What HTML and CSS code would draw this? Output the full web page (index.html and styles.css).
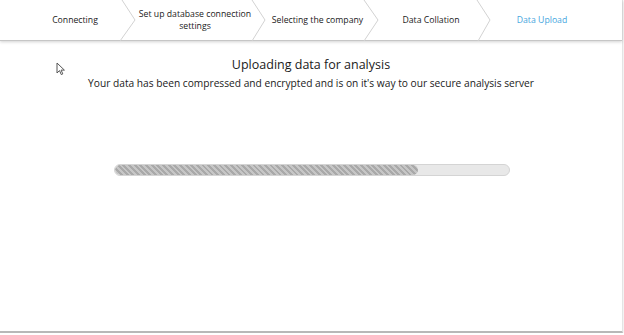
FILE: index.html
```html
<!DOCTYPE html>
<html lang="en">
<head>
    <meta charset="UTF-8">
    <title>Data Upload</title>
    <link rel="stylesheet" href="styles.css">
</head>
<body>
<div class="window">
    <div class="steps">
        <div class="step step-1">Connecting</div>
        <svg class="chev" width="16" height="41" viewBox="0 0 16 41"><path d="M2 0 L15 20 L0 41" /></svg>
        <div class="step step-2">Set up database connection<br>settings</div>
        <svg class="chev" width="16" height="41" viewBox="0 0 16 41"><path d="M2 0 L15 20 L2 41" /></svg>
        <div class="step step-3">Selecting the company</div>
        <svg class="chev" width="16" height="41" viewBox="0 0 16 41"><path d="M1 0 L15 20 L1 41" /></svg>
        <div class="step step-4">Data Collation</div>
        <svg class="chev" width="16" height="41" viewBox="0 0 16 41"><path d="M2 0 L15 20 L3 41" /></svg>
        <div class="step step-5 active">Data Upload</div>
    </div>

    <div class="content">
        <h1>Uploading data for analysis</h1>
        <p>Your data has been compressed and encrypted and is on it's way to our secure analysis server</p>
        <div class="progress">
            <div class="fill" style="width: 77%"></div>
        </div>
    </div>

    <svg class="cursor" width="10" height="14" viewBox="0 0 10 14">
        <path d="M1 1 L1 11 L3.5 8.6 L5.3 12.6 L6.8 11.9 L5.1 8.1 L8.4 8.1 Z" />
    </svg>
</div>
</body>
</html>
```

FILE: styles.css
```css
body {
    margin: 0;
    background: #fff;
    font-family: 'Segoe UI', 'Open Sans', sans-serif;
    color: #222;
}

.window {
    position: relative;
    width: 622px;
    height: 331px;
    border-right: 1px solid #e4e4e4;
    border-bottom: 2px solid #b8b8b8;
    box-shadow: 0 1px 2px rgba(0, 0, 0, 0.15);
}

.steps {
    display: flex;
    height: 40px;
    padding-left: 30px;
    border-bottom: 1px solid #c6c6c6;
    box-shadow: 0 1px 3px rgba(0, 0, 0, 0.18);
    font-size: 8.7px;
    color: #1a1a1a;
}

.step {
    display: flex;
    align-items: center;
    justify-content: center;
    text-align: center;
    white-space: nowrap;
    line-height: 12px;
}

.step-1 { width: 90px; }
.step-2 { width: 114px; padding-left: 4px; box-sizing: border-box; }
.step-3 { width: 97px; padding-left: 6px; box-sizing: border-box; }
.step-4 { width: 96px; padding-left: 8px; box-sizing: border-box; }
.step-5 { width: 102px; }

.step.active {
    color: #45a6de;
}

.chev path {
    fill: none;
    stroke: #d2d2d2;
    stroke-width: 1;
}

.content {
    text-align: center;
    padding-top: 14px;
}

.content h1 {
    margin: 0;
    font-size: 12.5px;
    font-weight: normal;
    line-height: 20px;
    color: #1a1a1a;
}

.content p {
    margin: 0;
    font-size: 10.2px;
    line-height: 16px;
    color: #1a1a1a;
}

.progress {
    width: 394px;
    height: 10px;
    margin: 73px 0 0 114px;
    background: #e8e8e8;
    border: 1px solid #d4d4d4;
    border-radius: 6px;
    overflow: hidden;
}

.progress .fill {
    height: 100%;
    border-radius: 6px;
    background: repeating-linear-gradient(45deg, #a9a9a9 0 2px, #c6c6c6 2px 4px);
}

.cursor {
    position: absolute;
    left: 56px;
    top: 62px;
}

.cursor path {
    fill: #fff;
    stroke: #555;
    stroke-width: 1;
}
```
